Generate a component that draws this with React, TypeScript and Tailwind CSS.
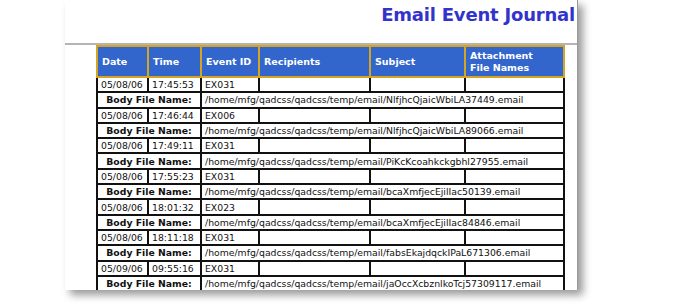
import React from "react";

const rows = [
  ["05/08/06", "17:45:53", "EX031", "/home/mfg/qadcss/qadcss/temp/email/NlfjhcQjaicWbiLA37449.email"],
  ["05/08/06", "17:46:44", "EX006", "/home/mfg/qadcss/qadcss/temp/email/NlfjhcQjaicWbiLA89066.email"],
  ["05/08/06", "17:49:11", "EX031", "/home/mfg/qadcss/qadcss/temp/email/PiKcKcoahkckgbhl27955.email"],
  ["05/08/06", "17:55:23", "EX031", "/home/mfg/qadcss/qadcss/temp/email/bcaXmfjecEjilIac50139.email"],
  ["05/08/06", "18:01:32", "EX023", "/home/mfg/qadcss/qadcss/temp/email/bcaXmfjecEjilIac84846.email"],
  ["05/08/06", "18:11:18", "EX031", "/home/mfg/qadcss/qadcss/temp/email/fabsEkajdqckIPaL671306.email"],
  ["05/09/06", "09:55:16", "EX031", "/home/mfg/qadcss/qadcss/temp/email/jaOccXcbznlkoTcj57309117.email"],
];

const hd = "border-2 border-[#d4a520] bg-[#3366cc] text-white font-bold text-left align-middle px-[4px] leading-[12px] text-[9.5px]";
const td = "border-2 border-[#111] px-[3px] leading-[11px] whitespace-nowrap";

export default function App() {
  return (
    <div className="w-[675px] h-[304px] bg-white overflow-hidden" style={{ fontFamily: '"DejaVu Sans", Verdana, sans-serif' }}>
      <div className="ml-[65px] w-[513px] h-[290px] bg-white border-r border-[#999] shadow-[5px_5px_8px_rgba(0,0,0,0.4)] overflow-hidden flex flex-col">
        <div className="h-[43px] shrink-0 flex justify-end items-start pt-[1px] pr-[2px]">
          <span className="text-[18px] font-bold text-[#3333cc] tracking-[-0.2px]">Email Event Journal</span>
        </div>
        <div className="h-[2px] shrink-0 bg-[#b5b5b5]" />
        <div className="pl-[31px] shrink-0">
          <table className="border-collapse w-[467px] table-fixed text-[9.3px] text-[#111]">
            <colgroup>
              <col className="w-[51px]" />
              <col className="w-[53px]" />
              <col className="w-[58px]" />
              <col className="w-[111px]" />
              <col className="w-[95px]" />
              <col className="w-[99px]" />
            </colgroup>
            <thead>
              <tr className="h-[31px]">
                <th className={hd}>Date</th>
                <th className={hd}>Time</th>
                <th className={hd}>Event ID</th>
                <th className={hd}>Recipients</th>
                <th className={hd}>Subject</th>
                <th className={hd}>Attachment<br />File Names</th>
              </tr>
            </thead>
            <tbody>
              {rows.map((r, i) => (
                <React.Fragment key={i}>
                  <tr className="h-[15.3px]">
                    <td className={td}>{r[0]}</td>
                    <td className={td}>{r[1]}</td>
                    <td className={td}>{r[2]}</td>
                    <td className={td}></td>
                    <td className={td}></td>
                    <td className={td}></td>
                  </tr>
                  <tr className="h-[15.3px]">
                    <td colSpan={2} className={td + " text-center font-bold"}>Body File Name:</td>
                    <td colSpan={4} className={td}>{r[3]}</td>
                  </tr>
                </React.Fragment>
              ))}
            </tbody>
          </table>
        </div>
      </div>
    </div>
  );
}
